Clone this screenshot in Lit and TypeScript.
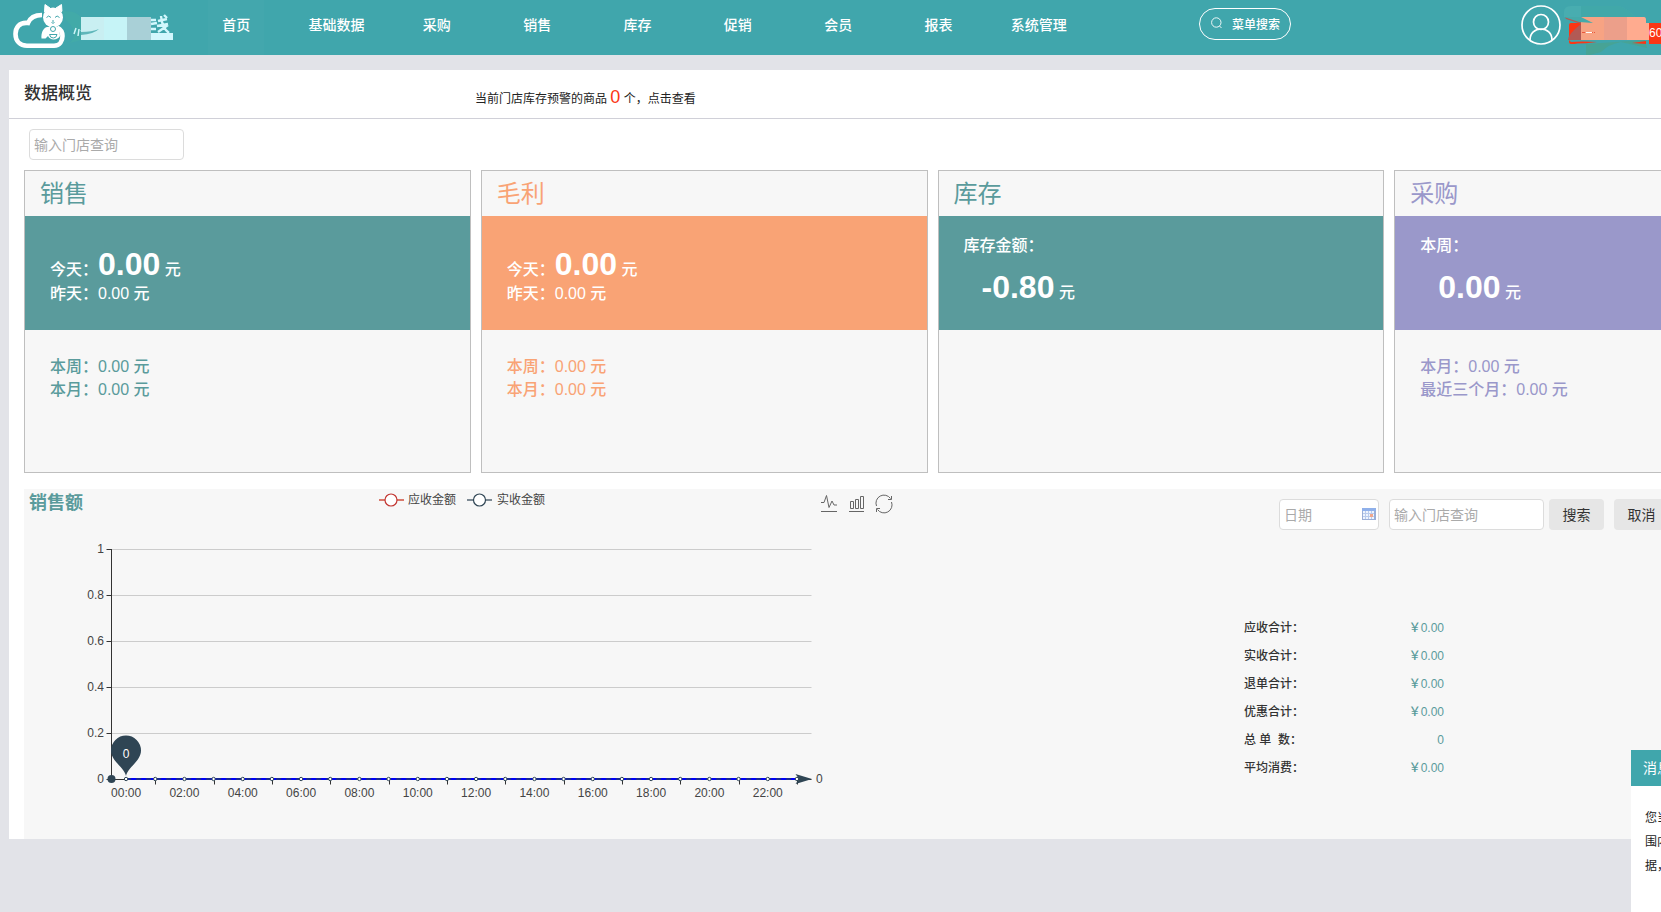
import { LitElement, html, svg, css } from "lit";
import { customElement, property } from "lit/decorators.js";

const sans = css`"Liberation Sans", "Noto Sans CJK SC", sans-serif`;

const control = css`
  input,
  button {
    font-family: inherit;
    font-size: 14px;
    box-sizing: border-box;
    height: 31px;
    margin: 0;
    border-radius: 4px;
  }
  input {
    border: 1px solid #dcdcdc;
    background: #fff;
    padding: 0 4px;
    color: #333;
  }
  input::placeholder {
    color: #aaa;
    opacity: 1;
  }
  .store {
    width: 155px;
  }
`;

@customElement("top-bar")
export class TopBar extends LitElement {
  static styles = css`
    :host {
      display: block;
      background: #40a6ac;
      color: #fff;
      height: 55px;
    }
    header {
      display: flex;
      height: 100%;
    }
    .brand {
      flex: 0 0 186px;
    }
    .brand svg,
    .account svg {
      display: block;
    }
    nav {
      flex: 0 0 903px;
      display: grid;
      grid-template-columns: repeat(9, 1fr);
      justify-items: center;
      height: 50px;
    }
    nav a {
      display: block;
      padding: 0 14px;
      font-size: 14px;
      font-weight: 500;
      line-height: 50px;
      color: #fff;
      text-decoration: none;
      white-space: nowrap;
    }
    nav a.active {
      background: #43a7ad;
      height: 55px;
    }
    .search {
      display: flex;
      align-items: center;
      gap: 10px;
      box-sizing: border-box;
      width: 92px;
      height: 32px;
      margin: 8px 0 0 110px;
      padding: 0 0 2px 11px;
      border: 1px solid #fff;
      border-radius: 16px;
      background: none;
      color: #fff;
      font: 500 12px ${sans};
      white-space: nowrap;
    }
    .search svg {
      flex: none;
    }
    .account {
      display: flex;
      margin-left: 230px;
    }
    .account svg {
      flex: none;
    }
    .phone {
      margin: 23px 0 0;
      height: 21px;
      width: 60px;
      background: #fb3615;
      font-size: 12px;
      line-height: 21px;
    }
  `;

  private items = ["首页", "基础数据", "采购", "销售", "库存", "促销", "会员", "报表", "系统管理"];

  render() {
    return html`
      <header>
        <div class="brand">
          <svg width="186" height="55" viewBox="0 0 186 55" aria-hidden="true">
            <path d="M42 15C35 15 30 18 28 23C19 22 15.5 28 15.5 34C15.5 41 20 45.700 27 45.700H54C60 45.700 62.500 41 62.500 36C62.500 32 60.500 29 57 27.500" fill="none" stroke="#fff" stroke-width="4.600" />
            <path d="M44.500 12L45 4.500L50 8ZM62 12L61.500 4.500L56 8Z" fill="#fff" stroke="#fff" stroke-width="1" stroke-linejoin="round" />
            <ellipse cx="53" cy="17.500" rx="10" ry="10" fill="#fff" />
            <path d="M46.500 17.500q2-3 4.500 0M55 17.500q2-3 4.500 0M51.500 22.500q1.500 1.500 3 0M53 20v2" fill="none" stroke="#40a6ac" stroke-width="1" />
            <path d="M47 27H59L60 36C58 40 50 41 48 36L45.500 38.500H41.500C41 33 43 28 47 27Z" fill="#fff" />
            <path d="M49.500 34.500H57Q56.500 38 53.300 38T49.500 34.500Z" fill="#fff" stroke="#40a6ac" stroke-width="1" />
            <circle cx="53" cy="29" r="2.500" fill="#fff" stroke="#40a6ac" />
            <path d="M62 11Q75 10 81 17V40L70 43Q80 33 66 20Z" fill="#42aaa8" />
            <path d="M76 28l-2 6M79 29l-1 7M81 30l2 3" stroke="#cdf5f8" stroke-width="1.500" fill="none" />
            <path d="M81 17H104V40H81Z" fill="#c9eff2" />
            <path d="M81 32Q92 32 99 29Q94 34 81 35Z" fill="#5fb6ba" />
            <path d="M104 17H127V40H104Z" fill="#c6f4f7" />
            <path d="M127 17H151V40H127Z" fill="#a9d0d7" />
            <path d="M151 33H173V40H151Z" fill="#d2f7fd" />
            <path d="M151 20l5 0M151 24l6-1M158 21l9-2M157 26l11-2M161 16Q162 28 169 33M168 25L158 32M151 29h5M164 15l3 3" stroke="#d2f7fd" stroke-width="2.400" fill="none" />
          </svg>
        </div>
        <nav>
          ${this.items.map((t, i) => html`<a href="#" class=${i === 0 ? "active" : ""}>${t}</a>`)}
        </nav>
        <button class="search">
          <svg width="11" height="12" viewBox="0 0 11 12" fill="none" stroke="#fff" stroke-width="0.900" aria-hidden="true">
            <circle cx="5.300" cy="5.500" r="4.700" /><path d="M8.500 9L10.500 11" />
          </svg>
          <span>菜单搜索</span>
        </button>
        <div class="account">
          <svg width="128" height="55" viewBox="0 0 128 55" aria-hidden="true">
            <g fill="none" stroke="#fff" stroke-width="1.700">
              <circle cx="20" cy="25" r="19" />
              <circle cx="20" cy="22" r="7.500" />
              <path d="M9 40C9 33 14 29 20 29S31 33 31 40" />
            </g>
            <path d="M43 12Q43 6 50 6H98Q106 8 114 17H43Z" fill="#48adb0" />
            <path d="M60 6H98Q106 8 114 17H60Z" fill="#41a8a9" />
            <path d="M50 23H128V44H50Q48 44 48 42V25Q48 23 50 23Z" fill="#fb3615" />
            <path d="M48 40H128V55H64Q66 46 50 42Z" fill="#40a6ac" />
            <path d="M65 44L124 40L126 48L100 42Q88 44 80 52L65 56Z" fill="#47a395" />
            <path d="M49 42Q60 41 76 42Q62 44 50 43.500ZM111 43L125 41V44Z" fill="#fb3615" />
            <path d="M44 17L60 20V40H47Q47 34 60 24L45 19Z" fill="#b25a55" />
            <path d="M60 17H83V40H60Z" fill="#f7a383" />
            <path d="M83 17H106V40H83Z" fill="#ec9f8a" />
            <path d="M106 17H123Q125 17 125 20V23H129V40H106Z" fill="#ffab8f" />
            <path d="M43 17H60L72 23L58 22Z" fill="#44aaaa" />
            <path d="M61 32.500h13" stroke="#e8583c" stroke-dasharray="3 1" />
            <path d="M65 32.500h6" stroke="#fff" stroke-width="1" />
          </svg>
          <p class="phone">60</p>
        </div>
      </header>
    `;
  }
}

interface Row {
  label: string;
  value: string;
}
interface Summary {
  title: string;
  tone: string;
  stacked?: boolean;
  main: Row;
  sub?: Row;
  rest: Row[];
}

@customElement("summary-card")
export class SummaryCard extends LitElement {
  static styles = css`
    :host {
      display: block;
      min-width: 0;
    }
    article {
      box-sizing: border-box;
      height: 303px;
      border: 1px solid #bfbfbf;
      background: #f7f7f7;
      font-size: 16px;
      font-weight: 500;
      line-height: 23px;
      white-space: nowrap;
    }
    .teal {
      --tone: #5a9b9c;
    }
    .orange {
      --tone: #f9a375;
    }
    .purple {
      --tone: #9a98ca;
    }
    h2 {
      margin: 0;
      padding-left: 15px;
      font-size: 24px;
      font-weight: 400;
      line-height: 45px;
      color: var(--tone);
    }
    p {
      margin: 0;
    }
    .band {
      box-sizing: border-box;
      height: 114px;
      padding: 30px 25px 0;
      background: var(--tone);
      color: #fff;
    }
    .stacked .band {
      padding-top: 18px;
    }
    .headline {
      height: 36px;
      line-height: 36px;
    }
    .stacked .headline {
      margin-top: 12px;
      padding-left: 18px;
    }
    strong {
      font-size: 32px;
      line-height: 36px;
    }
    .rest {
      padding: 25px 25px 0;
      color: var(--tone);
    }
  `;

  @property({ attribute: false }) data!: Summary;

  render() {
    const d = this.data;
    return html`
      <article class="${d.tone} ${d.stacked ? "stacked" : ""}">
        <h2>${d.title}</h2>
        <div class="band">
          ${d.stacked
            ? html`<p>${d.main.label}</p><p class="headline"><strong>${d.main.value}</strong> 元</p>`
            : html`<p class="headline">${d.main.label}<strong>${d.main.value}</strong> 元</p>`}
          ${d.sub ? html`<p>${d.sub.label}${d.sub.value} 元</p>` : ""}
        </div>
        <div class="rest">${d.rest.map((r) => html`<p>${r.label}${r.value} 元</p>`)}</div>
      </article>
    `;
  }
}

@customElement("sales-chart")
export class SalesChart extends LitElement {
  static styles = css`
    :host {
      display: block;
    }
    svg {
      display: block;
    }
    text {
      font-family: ${sans};
      font-size: 12px;
      fill: #444;
    }
    .end {
      text-anchor: end;
    }
    .mid {
      text-anchor: middle;
    }
    .pin {
      fill: #fff;
    }
  `;

  render() {
    const left = 87.5;
    const step = 700 / 24;
    const base = 290.5;
    const cx = (i: number) => left + step * (i + 0.5);
    const ticks = ["0", "0.2", "0.4", "0.6", "0.8", "1"];
    const hours = Array.from({ length: 24 }, (_, i) => i);
    return html`
      <svg width="900" height="350" viewBox="0 0 900 350" role="img" aria-label="销售额">
        <g fill="#fff" stroke-width="1.200">
          <path d="M355 11h25" stroke="#d9796c" stroke-width="2" />
          <circle cx="367" cy="11" r="6" stroke="#c23531" />
          <path d="M443 11h25" stroke="#7d8a94" stroke-width="2" />
          <circle cx="455.500" cy="11" r="6" stroke="#2f4554" />
        </g>
        <text x="384" y="15">应收金额</text>
        <text x="473" y="15">实收金额</text>
        <g fill="none" stroke="#666" stroke-width="1">
          <path d="M797 13.500H800L802.500 6.500L805 18.500L808 12L810 16H813M797 22.500H813" />
          <path d="M826.500 12.500H829.500V19.500H826.500ZM831.500 10.500H834.500V19.500H831.500ZM836.500 7.500H839.500V19.500H836.500ZM825 22.500H840" />
          <path d="M852.500 17A8 8 0 0 1 866.500 9.500M867.500 13A8 8 0 0 1 853.500 20.500M867.500 7V10.500H864M852.500 23V19.500H856" />
        </g>
        ${ticks.map((t, i) => {
          const y = base - 46 * i;
          return svg`
            <path d="M${left - 5} ${y}H${left}" stroke="#333" />
            ${i ? svg`<path d="M${left} ${y}H787.500" stroke="#ccc" />` : ""}
            <text class="end" x="80" y=${y + 3.5}>${t}</text>`;
        })}
        <path d="M${left} 60V${base}H787.500" fill="none" stroke="#333" />
        ${hours.map((i) =>
          i % 2
            ? svg`<path d="M${Math.round(cx(i)) + 0.5} ${base}v5" stroke="#333" />`
            : svg`<text class="mid" x=${cx(i)} y="308">${String(i).padStart(2, "0")}:00</text>`
        )}
        <path d="M${cx(0)} ${base - 0.5}H${cx(23)}" stroke="#0000f5" stroke-width="2" />
        <path d="M${cx(0)} ${base - 0.5}H${cx(23)}" stroke="#182b90" stroke-width="2" stroke-dasharray="5 5" />
        ${hours.map((i) => svg`<circle cx=${cx(i)} cy=${base - 0.5} r="1.700" fill="#fff" stroke="#2f4554" />`)}
        <circle cx="87.500" cy=${base - 0.5} r="4" fill="#2f4554" />
        <path d="M771.500 285L788 290L771.500 295L775 290Z" fill="#2f4554" />
        <path d="M102 287C100 278 87 272 87 261.500A15 15 0 0 1 117 261.500C117 272 104 278 102 287Z" fill="#2f4554" />
        <text class="mid pin" x="102" y="269">0</text>
        <text x="792" y="294">0</text>
      </svg>
    `;
  }
}

@customElement("app-root")
export class AppRoot extends LitElement {
  static styles = [
    control,
    css`
      :host {
        display: block;
        position: relative;
        overflow: hidden;
        min-height: 100vh;
        background: #e2e3e8;
        color: #333;
        font: 12px/24px ${sans};
      }
      .page {
        width: 100%;
        min-width: 1865px;
      }
      main {
        margin: 15px 9px 0;
        background: #fff;
      }
      .heading {
        display: grid;
        grid-template-columns: 451px 1fr;
        align-items: start;
        box-sizing: border-box;
        height: 49px;
        padding: 0 15px;
        border-bottom: 1px solid #d0d0d8;
        line-height: 48px;
      }
      h1 {
        margin: 0;
        font-size: 17px;
        font-weight: 500;
      }
      .notice {
        color: #222;
        line-height: 54px;
        text-decoration: none;
        white-space: nowrap;
      }
      .count {
        color: #fb3615;
        font-size: 18px;
      }
      .filter {
        display: flex;
        padding: 10px 20px;
      }
      .cards {
        display: grid;
        grid-template-columns: repeat(4, 1fr);
        gap: 10px;
        padding: 0 15px 16px;
      }
      .sales {
        display: grid;
        grid-template-columns: 1fr 597px;
        margin: 0 15px;
        background: #f7f7f7;
      }
      .plot {
        display: grid;
      }
      .plot > * {
        grid-area: 1 / 1;
      }
      h2 {
        margin: 0;
        padding: 2px 5px 0;
        font-size: 18px;
        font-weight: 700;
        line-height: 24px;
        color: #5a9b9c;
      }
      form {
        display: flex;
        padding: 10px 0 0 35px;
      }
      .date {
        position: relative;
        width: 100px;
        margin-right: 10px;
      }
      .date input {
        width: 100%;
      }
      .date svg {
        position: absolute;
        right: 3px;
        top: 8px;
      }
      form button {
        width: 55px;
        margin-left: 5px;
        padding: 0 0 2px;
        border: 0;
        background: #e6e6e6;
        color: #333;
      }
      form button + button {
        margin-left: 10px;
      }
      table {
        width: 200px;
        margin-top: 84px;
        border-collapse: collapse;
        line-height: 28px;
      }
      th,
      td {
        padding: 0;
        white-space: pre;
        font-weight: 500;
      }
      th {
        text-align: left;
      }
      td {
        text-align: right;
        color: #5a9b9c;
      }
      .message {
        position: absolute;
        left: 1631px;
        bottom: 0;
        width: 234px;
        height: 162px;
        background: #fff;
      }
      .message h3 {
        margin: 0;
        padding-left: 12px;
        background: #40a6ac;
        color: #fff;
        font-size: 14px;
        font-weight: 400;
        line-height: 36px;
      }
      .message p {
        margin: 0;
        padding: 20px 14px;
        color: #222;
      }
    `,
  ];

  private cards: Summary[] = [
    {
      title: "销售",
      tone: "teal",
      main: { label: "今天：", value: "0.00" },
      sub: { label: "昨天：", value: "0.00" },
      rest: [
        { label: "本周：", value: "0.00" },
        { label: "本月：", value: "0.00" },
      ],
    },
    {
      title: "毛利",
      tone: "orange",
      main: { label: "今天：", value: "0.00" },
      sub: { label: "昨天：", value: "0.00" },
      rest: [
        { label: "本周：", value: "0.00" },
        { label: "本月：", value: "0.00" },
      ],
    },
    {
      title: "库存",
      tone: "teal",
      stacked: true,
      main: { label: "库存金额：", value: "-0.80" },
      rest: [],
    },
    {
      title: "采购",
      tone: "purple",
      stacked: true,
      main: { label: "本周：", value: "0.00" },
      rest: [
        { label: "本月：", value: "0.00" },
        { label: "最近三个月：", value: "0.00" },
      ],
    },
  ];

  private totals: Row[] = [
    { label: "应收合计：", value: "￥0.00" },
    { label: "实收合计：", value: "￥0.00" },
    { label: "退单合计：", value: "￥0.00" },
    { label: "优惠合计：", value: "￥0.00" },
    { label: "总 单  数：", value: "0" },
    { label: "平均消费：", value: "￥0.00" },
  ];

  render() {
    return html`
      <div class="page">
        <top-bar></top-bar>
        <main>
          <div class="heading">
            <h1>数据概览</h1>
            <a class="notice" href="#">当前门店库存预警的商品 <span class="count">0</span> 个，点击查看</a>
          </div>
          <div class="filter">
            <input class="store" type="text" placeholder="输入门店查询" aria-label="输入门店查询" />
          </div>
          <section class="cards">
            ${this.cards.map((c) => html`<summary-card .data=${c}></summary-card>`)}
          </section>
          <section class="sales">
            <div class="plot">
              <h2>销售额</h2>
              <sales-chart></sales-chart>
            </div>
            <div>
              <form @submit=${(e: Event) => e.preventDefault()}>
                <div class="date">
                  <input type="text" placeholder="日期" aria-label="日期" />
                  <svg width="14" height="14" viewBox="0 0 14 14" aria-hidden="true">
                    <path d="M0 1H14V13H0Z" fill="#9aaed6" />
                    <path d="M0 1H14V4H0Z" fill="#8fb0ea" />
                    <path d="M1 4H12V12H1Z" fill="#eef4fd" />
                    <path d="M1 6.500H12M1 9.500H12M3.500 4V12M6.500 4V12M9.500 4V12" stroke="#b9cbec" fill="none" />
                    <path d="M8 7H11V10H8Z" fill="#f0a78c" />
                  </svg>
                </div>
                <input class="store" type="text" placeholder="输入门店查询" aria-label="按门店查询销售额" />
                <button type="submit">搜索</button>
                <button type="reset">取消</button>
              </form>
              <table>
                ${this.totals.map((r) => html`<tr><th scope="row">${r.label}</th><td>${r.value}</td></tr>`)}
              </table>
            </div>
          </section>
        </main>
      </div>
      <aside class="message">
        <h3>消息</h3>
        <p>您当<br />围内<br />据，</p>
      </aside>
    `;
  }
}
